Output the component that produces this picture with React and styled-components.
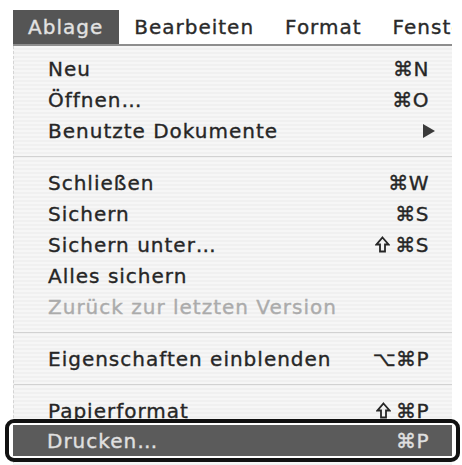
import styled, { createGlobalStyle } from 'styled-components';

const GlobalStyle = createGlobalStyle`
  html, body {
    margin: 0;
    padding: 0;
    background: #fff;
  }
  body {
    font-family: "DejaVu Sans", "Liberation Sans", sans-serif;
    color: #262626;
    -webkit-text-stroke: 0.35px currentColor;
  }
`;

const Screen = styled.div`
  width: 462px;
  height: 465px;
  padding: 10px 10px 0 13px;
  box-sizing: border-box;
  overflow: hidden;
`;

const MenuBar = styled.div`
  display: flex;
  align-items: stretch;
  height: 34px;
  border-bottom: 2px solid #8e8e8e;
  white-space: nowrap;
  overflow: hidden;
`;

const BarItem = styled.div`
  display: flex;
  align-items: center;
  padding: 0 16px 0 15px;
  font-size: 20px;
  letter-spacing: 1px;
  color: ${(p) => (p.$active ? '#e2e2e2' : '#2a2a2a')};
  background: ${(p) => (p.$active ? '#555' : 'transparent')};
`;

const Menu = styled.div`
  padding-top: 7px;
  border-left: 1px dashed #d4d4d4;
  background: repeating-linear-gradient(
    to bottom,
    #f6f6f6 0px,
    #f6f6f6 2px,
    #f0f0f0 2px,
    #f0f0f0 4px
  );
  height: 420px;
`;

const Row = styled.div`
  display: flex;
  align-items: center;
  height: 31px;
  padding: 0 ${(p) => (p.$submenu ? 17 : 23)}px 0 34px;
  font-size: 20px;
  letter-spacing: 1px;
  color: ${(p) => (p.$disabled ? '#ababab' : p.$active ? '#e0e0e0' : '#262626')};
  background: ${(p) => (p.$active ? '#5b5b5b' : 'transparent')};
`;

const Label = styled.span`
  flex: 1;
  white-space: nowrap;
`;

const Keys = styled.span`
  display: flex;
  align-items: center;
  font-size: 20px;
  letter-spacing: 0.5px;
  white-space: nowrap;
`;

const ShiftIcon = styled.svg`
  width: 15px;
  height: 17px;
  margin-right: 5px;
`;

const Arrow = styled.span`
  width: 0;
  height: 0;
  border-top: 7px solid transparent;
  border-bottom: 7px solid transparent;
  border-left: 12px solid #3a3a3a;
`;

const Separator = styled.div`
  height: 21px;
  display: flex;
  align-items: center;

  &::after {
    content: '';
    flex: 1;
    height: 1px;
    background: #d2d2d2;
  }
`;

// black marker ring drawn around the highlighted item
const Ring = styled.div`
  position: relative;
  margin: -7px -8px 0 -9px;
  padding: 2px 4px;
  border: 4px solid #111;
  border-radius: 9px;
  background: #fff;
`;

function Shift() {
  return (
    <ShiftIcon viewBox="0 0 15 17">
      <path
        d="M7.5 1.5 L13.5 8.5 H10 V15.5 H5 V8.5 H1.5 Z"
        fill="none"
        stroke="currentColor"
        strokeWidth="1.8"
        strokeLinejoin="miter"
      />
    </ShiftIcon>
  );
}

const groups = [
  [
    { label: 'Neu', keys: '⌘N' },
    { label: 'Öffnen…', keys: '⌘O' },
    { label: 'Benutzte Dokumente', submenu: true },
  ],
  [
    { label: 'Schließen', keys: '⌘W' },
    { label: 'Sichern', keys: '⌘S' },
    { label: 'Sichern unter…', keys: '⌘S', shift: true },
    { label: 'Alles sichern' },
    { label: 'Zurück zur letzten Version', disabled: true },
  ],
  [{ label: 'Eigenschaften einblenden', keys: '⌥⌘P' }],
];

function Item({ item, active }) {
  return (
    <Row $disabled={item.disabled} $submenu={item.submenu} $active={active}>
      <Label>{item.label}</Label>
      {item.keys && (
        <Keys>
          {item.shift && <Shift />}
          {item.keys}
        </Keys>
      )}
      {item.submenu && <Arrow />}
    </Row>
  );
}

export default function App() {
  return (
    <Screen>
      <GlobalStyle />
      <MenuBar>
        <BarItem $active>Ablage</BarItem>
        <BarItem>Bearbeiten</BarItem>
        <BarItem>Format</BarItem>
        <BarItem>Fenster</BarItem>
      </MenuBar>
      <Menu>
        {groups.map((g, i) => (
          <div key={i}>
            {g.map((item) => (
              <Item key={item.label} item={item} />
            ))}
            <Separator />
          </div>
        ))}
        <Item item={{ label: 'Papierformat', keys: '⌘P', shift: true }} />
        <Ring>
          <Item item={{ label: 'Drucken…', keys: '⌘P' }} active />
        </Ring>
      </Menu>
    </Screen>
  );
}
